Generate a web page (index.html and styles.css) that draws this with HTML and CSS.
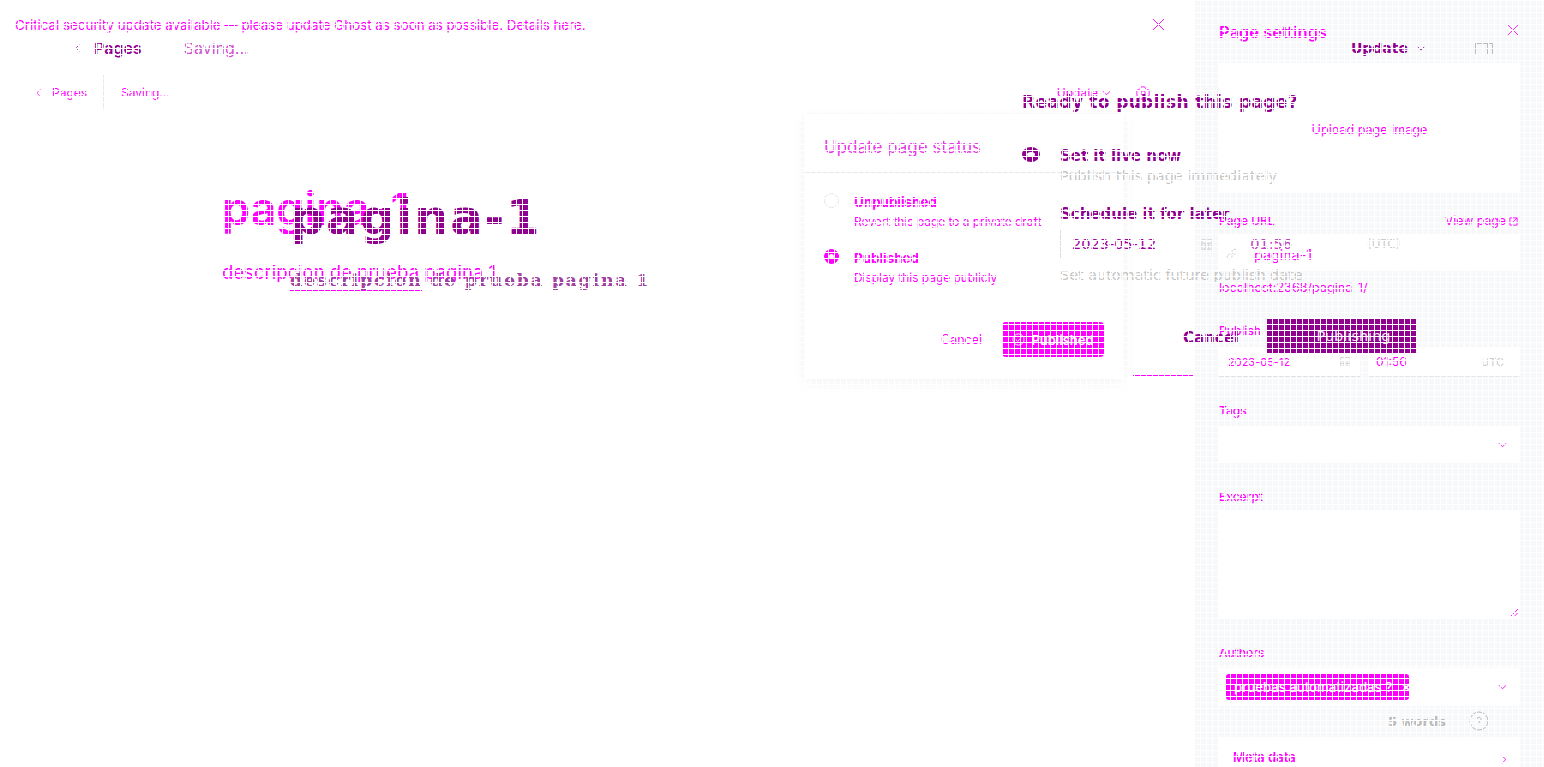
FILE: index.html
```html
<!DOCTYPE html>
<html lang="en">
<head>
  <meta charset="UTF-8">
  <meta name="viewport" content="width=device-width, initial-scale=1.0">
  <title>pagina-1</title>
  <link rel="stylesheet" href="styles.css">
</head>
<body>
  <div class="sheet">
    <div class="editor">
      <div class="banner">
        <span>Critical security update available — please update Ghost as soon as possible. Details here.</span>
        <svg class="icon banner-close" viewBox="0 0 14 14"><path d="M1 1l12 12M13 1L1 13"/></svg>
      </div>
      <div class="editor-bar">
        <div class="bar-left">
          <svg class="icon bar-back" viewBox="0 0 8 12"><path d="M6 1L1 6l5 5"/></svg>
          <span>Pages</span>
        </div>
        <div class="bar-status">Saving...</div>
        <div class="bar-right">
          <span>Update</span>
          <svg class="icon bar-caret" viewBox="0 0 10 6"><path d="M1 1l4 4 4-4"/></svg>
          <svg class="icon bar-gear" viewBox="0 0 16 16"><path d="M6 1h4l1 2 2 1 2 1v6l-2 1-2 1-1 2H6l-1-2-2-1-2-1V5l2-1 2-1z"/><circle cx="8" cy="8" r="2.500"/></svg>
        </div>
      </div>
      <h1 class="title">pagina-1</h1>
      <p class="desc">descripcion de prueba pagina 1</p>

      <div class="status-modal">
        <div class="modal-head">Update page status</div>
        <div class="modal-body">
          <div class="option">
            <span class="radio radio-off"></span>
            <div>
              <div class="option-name">Unpublished</div>
              <div class="option-text">Revert this page to a private draft</div>
            </div>
          </div>
          <div class="option">
            <span class="radio radio-on"></span>
            <div>
              <div class="option-name">Published</div>
              <div class="option-text">Display this page publicly</div>
            </div>
          </div>
        </div>
        <div class="modal-foot">
          <span>Cancel</span>
          <button class="btn-published">
            <svg class="icon" viewBox="0 0 14 14"><circle cx="7" cy="7" r="6"/><path d="M4 7l2 2 4-4"/></svg>
            Published
          </button>
        </div>
      </div>
    </div>

    <aside class="settings">
      <div class="settings-head">
        <h2>Page settings</h2>
        <svg class="icon" viewBox="0 0 14 14"><path d="M1 1l12 12M13 1L1 13"/></svg>
      </div>
      <div class="upload">Upload page image</div>

      <div class="label-row label-url">
        <span>Page URL</span>
        <span class="view-page">View page
          <svg class="icon" viewBox="0 0 10 10"><path d="M1 1h8v8H1zM4 6l5-5"/></svg>
        </span>
      </div>
      <div class="input input-url">
        <svg class="icon" viewBox="0 0 14 14"><path d="M6 8l3-3M5 6L2 9a2 2 0 0 0 3 3l3-3M6 5l3-3a2 2 0 0 1 3 3L9 8"/></svg>
        <span>pagina-1</span>
      </div>
      <div class="helper">localhost:2368/pagina-1/</div>

      <div class="label label-publish">Publish</div>
      <div class="publish-row">
        <div class="input input-date">
          <span>2023-05-12</span>
          <svg class="icon" viewBox="0 0 14 14"><rect x="1" y="2" width="12" height="11"/><path d="M1 6h12M5 6v7M9 6v7M1 9.500h12"/></svg>
        </div>
        <div class="input input-time">
          <span>01:56</span>
          <span class="utc">UTC</span>
        </div>
      </div>

      <div class="label label-tags">Tags</div>
      <div class="input input-tags">
        <svg class="icon caret" viewBox="0 0 10 6"><path d="M1 1l4 4 4-4"/></svg>
      </div>

      <div class="label label-excerpt">Excerpt</div>
      <div class="textarea">
        <svg class="icon grip" viewBox="0 0 10 10"><path d="M9 1L1 9M9 5L5 9"/></svg>
      </div>

      <div class="label label-authors">Authors</div>
      <div class="input input-authors">
        <span class="chip">pruebas automatizadas ? <b>×</b></span>
        <svg class="icon caret" viewBox="0 0 10 6"><path d="M1 1l4 4 4-4"/></svg>
      </div>

      <div class="meta-card">
        <span>Meta data</span>
        <svg class="icon caret" viewBox="0 0 6 10"><path d="M1 1l4 4-4 4"/></svg>
      </div>
    </aside>
  </div>

  <!-- second copy of the page, drawn over the first -->
  <div class="ghost-layer">
    <div class="g-bar">
      <svg class="icon g-back" viewBox="0 0 8 12"><path d="M6 1L1 6l5 5"/></svg>
      <span class="g-pages">Pages</span>
      <span class="g-saving">Saving...</span>
      <span class="g-update">Update</span>
      <svg class="icon g-caret" viewBox="0 0 10 6"><path d="M1 1l4 4 4-4"/></svg>
      <svg class="icon g-side" viewBox="0 0 18 12"><rect x="0.500" y="0.500" width="17" height="11"/><path d="M12.500 1v10"/></svg>
    </div>
    <div class="g-title">pagina-1</div>
    <div class="g-desc"><span class="g-spell">descripcion</span> de prueba pagina 1</div>

    <div class="publish-box">
      <h3>Ready to publish this page?</h3>
      <div class="pub-option">
        <span class="g-radio"></span>
        <div>
          <div class="pub-name">Set it live now</div>
          <div class="pub-text">Publish this page immediately</div>
        </div>
      </div>
      <div class="pub-option pub-later">
        <span class="g-radio g-radio-off"></span>
        <div>
          <div class="pub-name">Schedule it for later</div>
          <div class="pub-date">
            <span class="pub-day">2023-05-12</span>
            <svg class="icon pub-cal" viewBox="0 0 14 14"><rect x="1" y="2" width="12" height="11"/><path d="M1 6h12M5 6v7M9 6v7M1 9.500h12"/></svg>
            <span class="pub-time">01:56</span>
            <span class="pub-utc">(UTC)</span>
          </div>
          <div class="pub-text">Set automatic future publish date</div>
        </div>
      </div>
      <div class="pub-foot">
        <span>Cancel</span>
        <button class="btn-publishing">Publishing</button>
      </div>
      <div class="pub-rule"></div>
    </div>

    <div class="g-words">
      <span>5 words</span>
      <svg class="icon g-help" viewBox="0 0 20 20"><circle cx="10" cy="10" r="9"/><path d="M8 8a2 2 0 1 1 3 2l-1 1v1M10 15v1"/></svg>
    </div>
  </div>

  <div class="mesh"></div>
</body>
</html>
```

FILE: styles.css
```css
* {
  box-sizing: border-box;
}
html, body {
  margin: 0;
  height: 767px;
  overflow: hidden;
  background: #fff;
}
body {
  position: relative;
  font-family: "Inter", "Liberation Sans", sans-serif;
  color: #f0f;
}
.icon {
  fill: none;
  stroke: currentColor;
  stroke-width: 1;
  display: block;
}
h1, h2, h3, p {
  margin: 0;
}
button {
  border: 0;
  font-family: inherit;
}

/* first page */
.sheet {
  display: grid;
  grid-template-columns: 1195px 349px;
  height: 767px;
}
.editor {
  position: relative;
}
.banner {
  height: 48px;
  padding: 2px 30px 0 15px;
  display: flex;
  align-items: center;
  justify-content: space-between;
  font-size: 13.350px;
}
.banner-close {
  width: 13px;
  height: 13px;
  margin-top: -2px;
}
.editor-bar {
  margin-top: 27px;
  height: 35px;
  display: flex;
  align-items: center;
  font-size: 12px;
}
.bar-left {
  width: 104px;
  height: 35px;
  padding-left: 36px;
  border-right: 1px solid #e6e9ee;
  display: flex;
  align-items: center;
  gap: 10px;
}
.bar-back {
  width: 6px;
  height: 10px;
}
.bar-status {
  margin-left: 17px;
}
.bar-right {
  margin-left: auto;
  margin-right: 44px;
  display: flex;
  align-items: center;
  gap: 4px;
}
.bar-caret {
  width: 9px;
  height: 6px;
}
.bar-gear {
  width: 16px;
  height: 14px;
  margin-left: 20px;
}
.title {
  margin: 73px 0 0 222px;
  font-size: 45px;
  line-height: 52px;
  font-weight: 600;
}
.desc {
  margin: 26px 0 0 222px;
  font-size: 18.500px;
}

.status-modal {
  position: absolute;
  left: 804px;
  top: 114px;
  width: 320px;
  height: 264px;
  background: #fff;
  box-shadow: 0 0 1px rgba(0, 0, 0, 0.08), 0 4px 14px rgba(0, 0, 0, 0.05);
  display: flex;
  flex-direction: column;
}
.modal-head {
  height: 59px;
  padding: 23px 20px 0;
  border-bottom: 1px solid #e6e9ee;
  font-size: 17px;
  color: #e838e8;
}
.modal-body {
  padding: 20px 20px 0;
}
.option {
  display: flex;
  gap: 15px;
  height: 56px;
}
.radio {
  width: 15px;
  height: 15px;
  flex: none;
  border-radius: 50%;
}
.radio-off {
  border: 1px solid #e6e6e6;
}
.radio-on {
  background: #f0f;
  border: 5px solid #f0f;
}
.radio-on::after {
  content: "";
  display: block;
  width: 5px;
  height: 5px;
  background: #fff;
  border-radius: 50%;
}
.option-name {
  font-size: 13.400px;
  font-weight: 700;
  line-height: 18px;
}
.option-text {
  font-size: 11.900px;
  line-height: 22px;
}
.modal-foot {
  margin-top: auto;
  padding: 0 20px 21px;
  display: flex;
  align-items: center;
  justify-content: flex-end;
  gap: 20px;
  font-size: 12.500px;
}
.btn-published {
  width: 102px;
  height: 35px;
  background: #f0f;
  color: #fff;
  border-radius: 4px;
  font-size: 13px;
  font-weight: 600;
  display: flex;
  align-items: center;
  justify-content: center;
  gap: 6px;
}
.btn-published .icon {
  width: 13px;
  height: 13px;
}

/* settings panel */
.settings {
  background: #f7f8fa;
  padding: 0 24px;
  font-size: 12px;
}
.settings-head {
  height: 63px;
  display: flex;
  align-items: center;
  justify-content: space-between;
}
.settings-head h2 {
  font-size: 16.500px;
  font-weight: 600;
}
.settings-head .icon {
  width: 12px;
  height: 12px;
  margin-bottom: 3px;
  margin-right: 1px;
}
.upload {
  height: 129px;
  padding-top: 4px;
  background: #fff;
  display: flex;
  align-items: center;
  justify-content: center;
  font-size: 12.600px;
}
.label, .label-row {
  font-size: 12px;
  font-weight: 500;
  line-height: 16px;
}
.label-row {
  display: flex;
  justify-content: space-between;
}
.label-url {
  margin-top: 21px;
}
.view-page {
  font-weight: 400;
  font-size: 12.300px;
  padding-right: 2px;
  display: flex;
  align-items: center;
  gap: 3px;
}
.view-page .icon {
  width: 9px;
  height: 9px;
}
.input {
  background: #fff;
  display: flex;
  align-items: center;
}
.input-url {
  margin-top: 6px;
  height: 35px;
  padding: 3px 0 0 7px;
  gap: 16px;
  font-size: 14.300px;
}
.input-url .icon {
  width: 12px;
  height: 12px;
  color: #ccc;
}
.helper {
  margin-top: 10px;
  line-height: 16px;
  font-size: 12.600px;
}
.label-publish {
  margin-top: 27px;
}
.publish-row {
  margin-top: 8px;
  display: flex;
  gap: 8px;
}
.input-date {
  width: 141px;
  height: 30px;
  padding: 0 9px;
  justify-content: space-between;
  border-bottom: 1px solid #e2e2e2;
  font-size: 11px;
}
.input-date .icon {
  width: 11px;
  height: 11px;
  color: #ccc;
}
.input-time {
  flex: 1;
  height: 30px;
  padding: 0 16px 0 8px;
  justify-content: space-between;
  border-bottom: 1px solid #e8e8e8;
  font-size: 12px;
}
.utc {
  color: #ccc;
  font-size: 11px;
}
.label-tags {
  margin-top: 26px;
}
.input-tags {
  margin-top: 8px;
  height: 36px;
  justify-content: flex-end;
  padding-right: 13px;
}
.caret {
  width: 9px;
  height: 6px;
}
.label-excerpt {
  margin-top: 26px;
}
.textarea {
  margin-top: 6px;
  height: 107px;
  background: #fff;
  display: flex;
  align-items: flex-end;
  justify-content: flex-end;
  padding: 0 1px 1px 0;
}
.grip {
  width: 9px;
  height: 9px;
}
.label-authors {
  margin-top: 27px;
}
.input-authors {
  margin-top: 7px;
  height: 38px;
  padding: 0 13px 0 7px;
  justify-content: space-between;
}
.chip {
  width: 183px;
  height: 26px;
  background: #f0f;
  color: #fff;
  border-radius: 3px;
  display: flex;
  align-items: center;
  padding-left: 8px;
  font-size: 13.200px;
  font-weight: 500;
  white-space: pre;
}
.chip b {
  margin-left: 6px;
}
.meta-card {
  margin-top: 31px;
  height: 60px;
  background: #fff;
  padding: 12px 13px 0 14px;
  display: flex;
  justify-content: space-between;
  font-size: 13px;
  font-weight: 600;
}
.meta-card .caret {
  width: 6px;
  height: 9px;
  margin-top: 6px;
}

/* second page */
.ghost-layer {
  position: absolute;
  left: 0;
  top: 0;
  width: 1544px;
  height: 767px;
  font-family: "DejaVu Sans", sans-serif;
  color: #8f008f;
}
.g-bar {
  height: 36px;
  padding: 30px 0 0 75px;
  box-sizing: content-box;
  display: flex;
  align-items: center;
  font-size: 16px;
}
.g-back {
  width: 6px;
  height: 8px;
}
.g-pages {
  margin-left: 13px;
  font-family: "Inter", sans-serif;
  font-weight: 600;
}
.g-saving {
  margin-left: 42px;
  font-family: "Inter", sans-serif;
  color: #d050d0;
}
.g-update {
  margin-left: auto;
  font-size: 14px;
  font-weight: 700;
}
.g-caret {
  width: 8px;
  height: 5px;
  margin-left: 9px;
}
.g-side {
  width: 18px;
  height: 12px;
  margin: 2px 51px 0 50px;
  color: #bbb;
}
.g-title {
  margin: 124px 0 0 290px;
  font-size: 48px;
  line-height: 54px;
  font-weight: 700;
  letter-spacing: 1.700px;
}
.g-desc {
  margin: 26px 0 0 290px;
  font-size: 17.500px;
  font-weight: 700;
  font-family: "DejaVu Serif", serif;
  letter-spacing: 1.700px;
  color: #a040a0;
}
.g-spell {
  border-bottom: 1px solid #f0f;
}
.publish-box {
  position: absolute;
  left: 1022px;
  top: 90px;
  width: 394px;
}
.publish-box h3 {
  font-size: 17px;
  line-height: 24px;
  font-weight: 700;
  letter-spacing: 0.350px;
}
.pub-option {
  display: flex;
  gap: 20px;
  margin-top: 33px;
}
.g-radio {
  width: 18px;
  height: 15px;
  flex: none;
  border-radius: 50%;
  border: 5px solid #8f008f;
  background: #fff;
}
.g-radio-off {
  border: 0;
  background: none;
}
.pub-name {
  font-size: 15px;
  font-weight: 700;
  line-height: 18px;
}
.pub-text {
  font-size: 14.400px;
  line-height: 20px;
  margin-top: 1px;
  color: #c4c4c4;
  white-space: nowrap;
}
.pub-later {
  margin-top: 19px;
}
.pub-date {
  margin: 7px 0 7px;
  height: 28px;
  display: flex;
  align-items: center;
  border-left: 1px solid #ddd;
  width: 340px;
  font-size: 14.500px;
}
.pub-day {
  flex: none;
  margin-left: 11px;
  color: #a000a0;
  white-space: nowrap;
}
.pub-cal {
  flex: none;
  width: 16px;
  height: 12px;
  margin-left: 43px;
  color: #ccc;
}
.pub-time {
  margin-left: 35px;
  color: #c040c0;
}
.pub-utc {
  margin-left: 75px;
  font-size: 12px;
  color: #ccc;
}
.pub-foot {
  margin-top: 34px;
  padding-left: 142px;
  display: flex;
  align-items: center;
  justify-content: space-between;
  font-size: 15px;
  font-weight: 700;
}
.pub-foot span {
  border-left: 1px solid #ddd;
  padding: 9px 0 5px 18px;
}
.btn-publishing {
  width: 149px;
  height: 34px;
  padding-left: 30px;
  background: #8f008f;
  color: #f0e4f0;
  font-family: "DejaVu Sans", sans-serif;
  font-size: 14.500px;
}
.pub-rule {
  margin: 22px 0 0 111px;
  width: 60px;
  height: 1px;
  background: #f0f;
}
.g-words {
  position: absolute;
  left: 1388px;
  top: 711px;
  width: 101px;
  display: flex;
  align-items: center;
  justify-content: space-between;
  font-size: 13px;
  font-weight: 700;
  color: #bbb;
}
.g-help {
  width: 20px;
  height: 20px;
  color: #bbb;
}

/* thin white lines over everything */
.mesh {
  position: absolute;
  left: 0;
  top: 0;
  width: 1544px;
  height: 767px;
  background-image: linear-gradient(#fff 1px, transparent 1px), linear-gradient(90deg, #fff 1px, transparent 1px);
  background-size: 6px 6px;
}
```
